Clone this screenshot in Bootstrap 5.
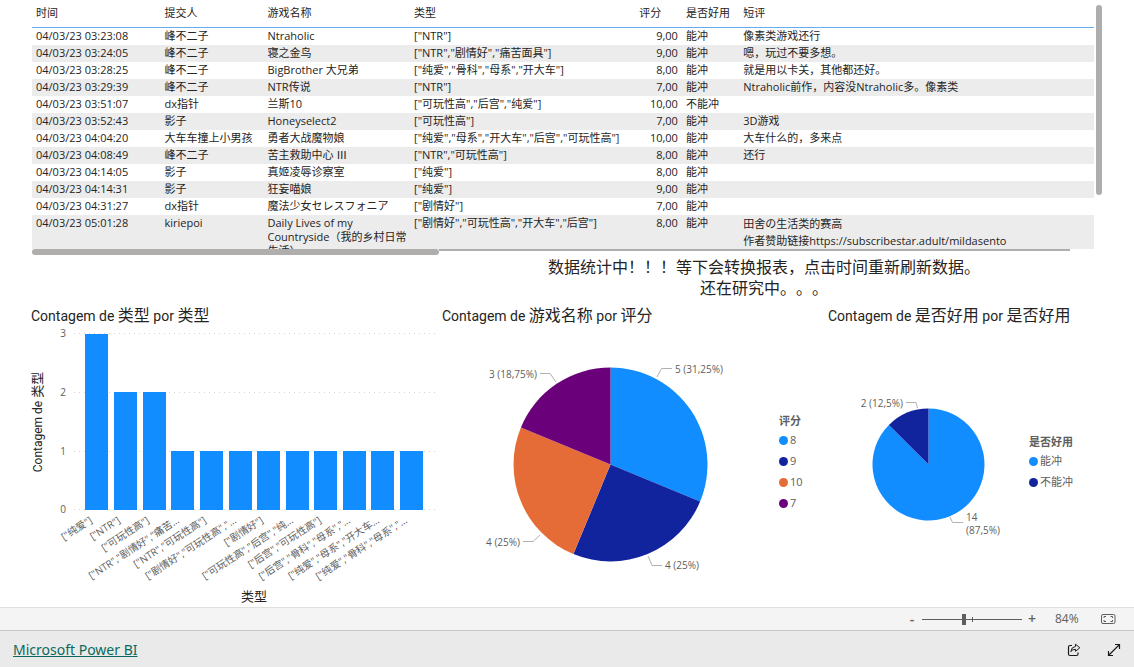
<!DOCTYPE html>
<html lang="zh-CN">
<head>
<meta charset="utf-8">
<meta name="viewport" content="width=device-width, initial-scale=1">
<title>Microsoft Power BI</title>
<link rel="stylesheet" href="https://cdn.jsdelivr.net/npm/bootstrap@5.3.0/dist/css/bootstrap.min.css">
<style>
  body { font-family: "Open Sans", "Noto Sans CJK SC", sans-serif; color: #252423; background: #fff; text-spacing-trim: space-all; }
  .report { padding-left: 31px; }

  /* data table */
  .grid-visual { padding: 0 32px 0 1px; }
  .grid-clip { height: 249px; overflow: hidden; }
  .grid-table { table-layout: fixed; width: 100%; font-size: 11px; line-height: 14px; }
  .grid-table th { height: 27px; padding: 0 4px; font-weight: 400; border-bottom: 1px solid #62aef0; white-space: nowrap; }
  .grid-table td { height: 17px; padding: 1px 4px 2px; vertical-align: top; white-space: nowrap; }
  .grid-table td.wrap-cell { white-space: normal; padding-right: 0; }
  .grid-table td.note-lines { line-height: 17px; padding-top: 0; padding-bottom: 0; }
  .grid-table tbody tr:nth-child(even) { background: #ececec; }
  .bar-y { width: 6px; height: 190px; margin: 5px 0 0 2px; border-radius: 3px; background: #b0aead; }
  .bar-x { height: 6px; border-radius: 3px; background: #b0aead; width: 38%; }
  .bar-x-thin { height: 2px; background: #b0aead; width: 59%; }

  .notice { font-size: 16px; line-height: 21px; padding: 2px 0 0 363px; }

  /* charts */
  .charts { display: grid; grid-template-columns: 411fr 386fr 306fr; }
  .visual-title { font-family: Roboto, "Noto Sans CJK SC", sans-serif; font-size: 14px; line-height: 22px; margin: 0; padding-top: 6px; font-weight: 400; white-space: nowrap; }
  .zh { font-size: 16px; line-height: 20px; }
  .plot { display: block; width: 100%; height: auto; flex: 1 1 0; min-width: 0; }
  .plot text { font-size: 10px; fill: #605e5c; }
  .plot .axis-title { font-family: Roboto, "Noto Sans CJK SC", sans-serif; font-size: 12px; fill: #252423; }
  .plot .axis-title tspan, .plot .axis-zh { font-size: 13px; }
  .rule { stroke: #d6d4d2; stroke-dasharray: 1 4; }
  .leader { fill: none; stroke: #b3b0ad; }
  .c-blue { fill: #118dff; } .c-navy { fill: #12239e; } .c-orange { fill: #e66c37; } .c-purple { fill: #6b007b; }
  .key { font-size: 11px; color: #605e5c; padding-bottom: 8px; }
  .key-a { width: 49px; } .key-b { width: 105px; }
  .key h3 { font-size: 11px; line-height: 18px; font-weight: 700; margin: 0; }
  .key li { display: flex; align-items: center; gap: 2px; height: 21px; white-space: nowrap; }
  .dot { width: 9px; height: 9px; border-radius: 50%; }
  .d-blue { background: #118dff; } .d-navy { background: #12239e; } .d-orange { background: #e66c37; } .d-purple { background: #6b007b; }

  /* zoom bar and footer */
  .zoombar { height: 24px; background: #f4f4f4; border-top: 1px solid #e1dfdd; border-bottom: 1px solid #c8c6c4; color: #605e5c; font-size: 12px; padding-right: 18px; }
  .zoombar button, .powerbar button { border: 0; background: none; padding: 0; color: inherit; line-height: 1; display: flex; align-items: center; justify-content: center; }
  .step { width: 10px; font-size: 14px; font-weight: 600; }
  .zoom-range { -webkit-appearance: none; appearance: none; width: 100px; height: 12px; margin: 0 5px; background:
      linear-gradient(#605e5c, #605e5c) 50px 50% / 1px 5px no-repeat,
      linear-gradient(#605e5c, #605e5c) 0 50% / 100% 1px no-repeat; }
  .zoom-range::-webkit-slider-thumb { -webkit-appearance: none; width: 4px; height: 11px; background: #605e5c; border: 0; border-radius: 0; }
  .percent { width: 24px; margin: 0 22px 0 18px; }
  .powerbar { height: 36px; background: #eaeaea; padding: 2px 13px 0; }
  .powerbar a { color: #0b6a5d; font-family: "Noto Sans", sans-serif; font-size: 14px; line-height: 20px; }
</style>
</head>
<body class="d-flex flex-column min-vh-100">
<main class="report">
  <section class="grid-visual">
    <div class="d-flex">
      <div class="grid-clip flex-grow-1">
        <table class="grid-table">
          <colgroup><col style="width:12.1%"><col style="width:9.7%"><col style="width:13.8%"><col style="width:21.2%"><col style="width:4.4%"><col style="width:5.4%"><col></colgroup>
          <thead><tr><th>时间</th><th>提交人</th><th>游戏名称</th><th>类型</th><th>评分</th><th>是否好用</th><th>短评</th></tr></thead>
          <tbody>
            <tr><td>04/03/23 03:23:08</td><td>峰不二子</td><td>Ntraholic</td><td>["NTR"]</td><td class="text-end">9,00</td><td>能冲</td><td>像素类游戏还行</td></tr>
            <tr><td>04/03/23 03:24:05</td><td>峰不二子</td><td>寝之金鸟</td><td>["NTR","剧情好","痛苦面具"]</td><td class="text-end">9,00</td><td>能冲</td><td>嗯，玩过不要多想。</td></tr>
            <tr><td>04/03/23 03:28:25</td><td>峰不二子</td><td>BigBrother 大兄弟</td><td>["纯爱","骨科","母系","开大车"]</td><td class="text-end">8,00</td><td>能冲</td><td>就是用以卡关，其他都还好。</td></tr>
            <tr><td>04/03/23 03:29:39</td><td>峰不二子</td><td>NTR传说</td><td>["NTR"]</td><td class="text-end">7,00</td><td>能冲</td><td>Ntraholic前作，内容没Ntraholic多。像素类</td></tr>
            <tr><td>04/03/23 03:51:07</td><td>dx指针</td><td>兰斯10</td><td>["可玩性高","后宫","纯爱"]</td><td class="text-end">10,00</td><td>不能冲</td><td></td></tr>
            <tr><td>04/03/23 03:52:43</td><td>影子</td><td>Honeyselect2</td><td>["可玩性高"]</td><td class="text-end">7,00</td><td>能冲</td><td>3D游戏</td></tr>
            <tr><td>04/03/23 04:04:20</td><td>大车车撞上小男孩</td><td>勇者大战魔物娘</td><td>["纯爱","母系","开大车","后宫","可玩性高"]</td><td class="text-end">10,00</td><td>能冲</td><td>大车什么的，多来点</td></tr>
            <tr><td>04/03/23 04:08:49</td><td>峰不二子</td><td>苦主救助中心 Ⅲ</td><td>["NTR","可玩性高"]</td><td class="text-end">8,00</td><td>能冲</td><td>还行</td></tr>
            <tr><td>04/03/23 04:14:05</td><td>影子</td><td>真姬凌辱诊察室</td><td>["纯爱"]</td><td class="text-end">8,00</td><td>能冲</td><td></td></tr>
            <tr><td>04/03/23 04:14:31</td><td>影子</td><td>狂妄喵娘</td><td>["纯爱"]</td><td class="text-end">9,00</td><td>能冲</td><td></td></tr>
            <tr><td>04/03/23 04:31:27</td><td>dx指针</td><td>魔法少女セレスフォニア</td><td>["剧情好"]</td><td class="text-end">7,00</td><td>能冲</td><td></td></tr>
            <tr><td>04/03/23 05:01:28</td><td>kiriepoi</td><td class="wrap-cell">Daily Lives of my Countryside（我的乡村日常生活）</td><td>["剧情好","可玩性高","开大车","后宫"]</td><td class="text-end">8,00</td><td>能冲</td><td class="note-lines">田舍の生活类的赛高<br>作者赞助链接https://subscribestar.adult/mildasento</td></tr>
          </tbody>
        </table>
      </div>
      <div class="bar-y flex-shrink-0"></div>
    </div>
    <div class="d-flex"><div class="bar-x"></div><div class="bar-x-thin"></div></div>
  </section>

  <p class="notice text-center mb-0">数据统计中！！！等下会转换报表，点击时间重新刷新数据。<br>还在研究中。。。</p>

  <div class="charts">
    <section>
      <h2 class="visual-title">Contagem de <span class="zh">类型</span> por <span class="zh">类型</span></h2>
      <svg class="plot" viewBox="0 0 411 280" role="img" aria-label="Contagem de 类型 por 类型">
        <path class="rule" d="M43 6.5H405M43 65.5H405M43 124.5H405M43 182.5H405"/>
        <g text-anchor="end">
          <text x="35" y="10">3</text><text x="35" y="69">2</text><text x="35" y="128">1</text><text x="35" y="186">0</text>
        </g>
        <g class="c-blue">
          <rect x="54" y="7" width="23" height="176"/>
          <rect x="83" y="65" width="23" height="118"/><rect x="112" y="65" width="23" height="118"/>
          <rect x="140" y="124" width="23" height="59"/><rect x="169" y="124" width="23" height="59"/><rect x="198" y="124" width="23" height="59"/>
          <rect x="226" y="124" width="23" height="59"/><rect x="255" y="124" width="23" height="59"/><rect x="283" y="124" width="23" height="59"/>
          <rect x="312" y="124" width="23" height="59"/><rect x="340" y="124" width="23" height="59"/><rect x="369" y="124" width="23" height="59"/>
        </g>
        <g text-anchor="end">
          <text transform="translate(62 195) rotate(-33)">["纯爱"]</text>
          <text transform="translate(90 195) rotate(-33)">["NTR"]</text>
          <text transform="translate(119 195) rotate(-33)">["可玩性高"]</text>
          <text transform="translate(149 195) rotate(-33)">["NTR","剧情好","痛苦...</text>
          <text transform="translate(176 195) rotate(-33)">["NTR","可玩性高"]</text>
          <text transform="translate(206 195) rotate(-33)">["剧情好","可玩性高","...</text>
          <text transform="translate(233 195) rotate(-33)">["剧情好"]</text>
          <text transform="translate(263 195) rotate(-33)">["可玩性高","后宫","纯...</text>
          <text transform="translate(291 195) rotate(-33)">["后宫","可玩性高"]</text>
          <text transform="translate(320 195) rotate(-33)">["后宫","骨科","母系","...</text>
          <text transform="translate(349 195) rotate(-33)">["纯爱","母系","开大车...</text>
          <text transform="translate(377 195) rotate(-33)">["纯爱","骨科","母系","...</text>
        </g>
        <text class="axis-title" text-anchor="middle" transform="translate(11 95) rotate(-90)">Contagem de <tspan>类型</tspan></text>
        <text class="axis-title axis-zh" text-anchor="middle" x="223" y="274"><tspan>类型</tspan></text>
      </svg>
    </section>

    <section>
      <h2 class="visual-title">Contagem de <span class="zh">游戏名称</span> por <span class="zh">评分</span></h2>
      <div class="d-flex align-items-center">
        <svg class="plot" viewBox="0 0 337 280" role="img" aria-label="Contagem de 游戏名称 por 评分">
          <path class="c-blue" d="M168.500 137.500V40.500A97 97 0 0 1 258.100 174.600Z"/>
          <path class="c-navy" d="M168.500 137.500L258.100 174.600A97 97 0 0 1 131.400 227.100Z"/>
          <path class="c-orange" d="M168.500 137.500L131.400 227.100A97 97 0 0 1 78.900 100.400Z"/>
          <path class="c-purple" d="M168.500 137.500L78.900 100.400A97 97 0 0 1 168.500 40.500Z"/>
          <path class="leader" d="M215 50L219.500 41.500H230M98 46.500H108L114 55M81 214.500H91L98 208M206 229L210 238.500H220"/>
          <text x="233" y="46">5 (31,25%)</text>
          <text x="95" y="51" text-anchor="end">3 (18,75%)</text>
          <text x="78" y="219" text-anchor="end">4 (25%)</text>
          <text x="223" y="242">4 (25%)</text>
        </svg>
        <div class="key key-a">
          <h3>评分</h3>
          <ul class="list-unstyled mb-0">
            <li><span class="dot d-blue"></span>8</li>
            <li><span class="dot d-navy"></span>9</li>
            <li><span class="dot d-orange"></span>10</li>
            <li><span class="dot d-purple"></span>7</li>
          </ul>
        </div>
      </div>
    </section>

    <section>
      <h2 class="visual-title">Contagem de <span class="zh">是否好用</span> por <span class="zh">是否好用</span></h2>
      <div class="d-flex align-items-center">
        <svg class="plot" viewBox="0 0 201 280" role="img" aria-label="Contagem de 是否好用 por 是否好用">
          <path class="c-blue" d="M100.500 137.500V81.500A56 56 0 1 1 60.900 97.900Z"/>
          <path class="c-navy" d="M100.500 137.500L60.900 97.900A56 56 0 0 1 100.500 81.500Z"/>
          <path class="leader" d="M78 75.500H88L89.500 81M122 190L124.500 195.500H135"/>
          <text x="75" y="80" text-anchor="end">2 (12,5%)</text>
          <text x="138" y="194">14</text>
          <text x="138" y="207">(87,5%)</text>
        </svg>
        <div class="key key-b">
          <h3>是否好用</h3>
          <ul class="list-unstyled mb-0">
            <li><span class="dot d-blue"></span>能冲</li>
            <li><span class="dot d-navy"></span>不能冲</li>
          </ul>
        </div>
      </div>
    </section>
  </div>
</main>

<div class="mt-auto">
  <div class="zoombar d-flex align-items-center justify-content-end">
    <button class="step" type="button" aria-label="缩小">-</button>
    <input class="zoom-range" type="range" min="0" max="100" value="42" aria-label="缩放">
    <button class="step" type="button" aria-label="放大">+</button>
    <span class="percent">84%</span>
    <button type="button" aria-label="适应页面">
      <svg width="15" height="12" viewBox="0 0 15 12" fill="none" stroke="#605e5c"><rect x=".5" y="1.500" width="13.500" height="9" rx="1.500"/><path d="M3 5V3.500H5M9.500 3.500H11.500V5M11.500 7V8.500H9.500M5 8.500H3V7"/></svg>
    </button>
  </div>
  <footer class="powerbar d-flex align-items-center justify-content-between">
    <a href="#">Microsoft Power BI</a>
    <div class="d-flex align-items-center" style="gap:26px">
      <button type="button" aria-label="共享">
        <svg width="14" height="14" viewBox="0 0 14 14" fill="none" stroke="#1b1a19" stroke-linejoin="round"><path d="M5 2.500H3Q1.500 2.500 1.500 4V11Q1.500 12.500 3 12.500H9.500Q11 12.500 11 11V9.500" stroke-width="1.200"/><path d="M8.500 1.200L12.800 4.800L8.500 8.300V6.300Q5.500 6.200 3.800 8.600Q4.300 4 8.500 3.400Z"/></svg>
      </button>
      <button type="button" aria-label="全屏">
        <svg width="14" height="14" viewBox="0 0 14 14" fill="none" stroke="#1b1a19" stroke-width="1.200"><path d="M1.500 12.500L12.500 1.500M8 1.500H12.500V6M1.500 8V12.500H6"/></svg>
      </button>
    </div>
  </footer>
</div>
<script src="https://cdn.jsdelivr.net/npm/bootstrap@5.3.0/dist/js/bootstrap.bundle.min.js"></script>
</body>
</html>
